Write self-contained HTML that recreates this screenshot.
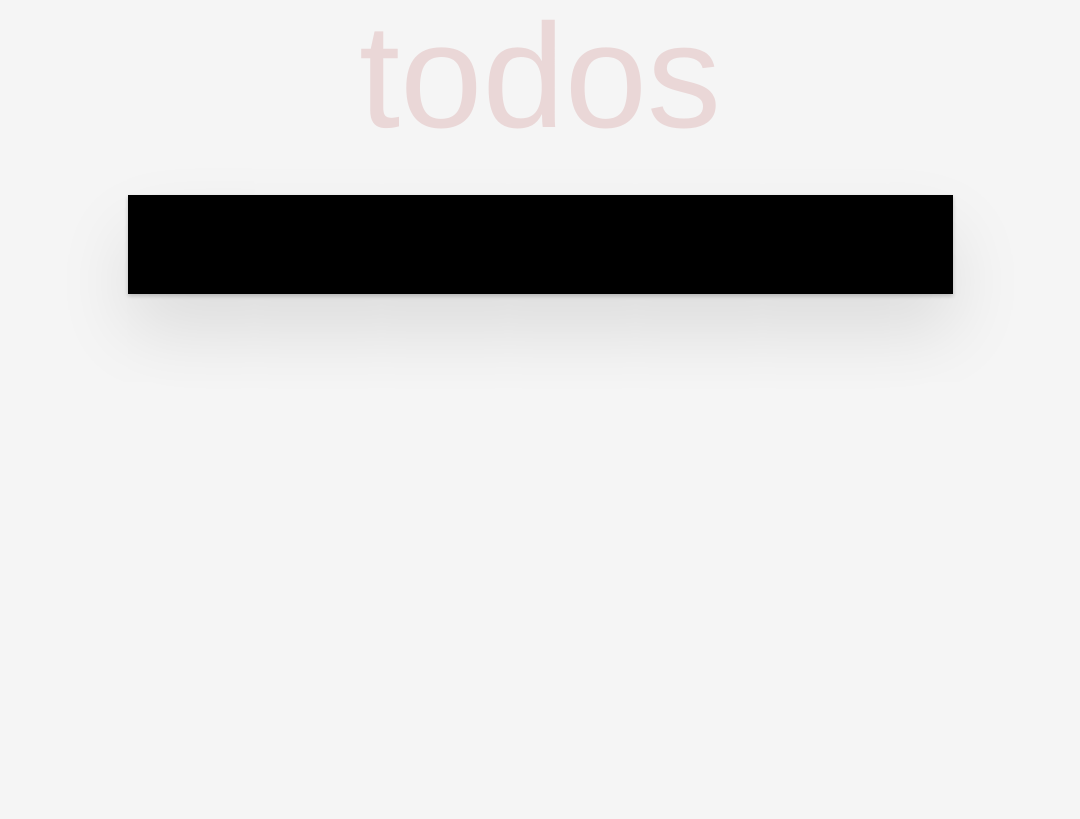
<!DOCTYPE html>
<html><head><meta charset="utf-8"><style>
html,body{margin:0;padding:0;background:#f5f5f5;width:1080px;height:819px;overflow:hidden;font-family:"Liberation Sans",Arial,sans-serif}
h1{position:absolute;left:0;width:1080px;top:3px;margin:0;text-align:center;font-size:148px;line-height:148px;font-weight:100;color:rgba(175,47,47,0.15)}
.box{position:absolute;left:128px;top:195px;width:825px;height:99px;background:#000;box-shadow:0 2px 4px rgba(0,0,0,.2),0 37px 74px 0 rgba(0,0,0,.1)}
</style></head><body>
<h1>todos</h1>
<div class="box"></div>
</body></html>
